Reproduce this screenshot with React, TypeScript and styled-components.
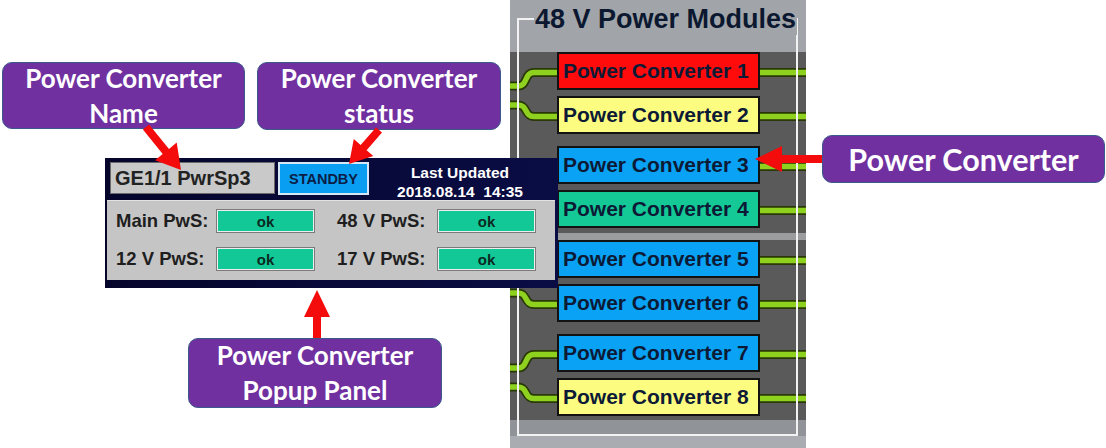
import React from "react";
import styled, { createGlobalStyle } from "styled-components";

const GlobalStyle = createGlobalStyle`
  html, body { margin: 0; padding: 0; background: #ffffff; }
  body { font-family: "Liberation Sans", Arial, sans-serif; }
`;

const Stage = styled.div`
  position: relative;
  width: 1106px;
  height: 448px;
  overflow: hidden;
  background: #ffffff;
  display: flex;
  padding-left: 510px;
  box-sizing: border-box;
`;

/* ---------- 48 V module panel ---------- */

const ModulePanel = styled.section`
  position: relative;
  width: 296px;
  height: 448px;
  flex: none;
  background: linear-gradient(
    180deg,
    #a1a5a9 0 52px,
    #5a5a5a 52px 420px,
    #909498 420px 436px,
    #a9adb1 436px 448px
  );
`;

const WireLayer = styled.svg`
  position: absolute;
  left: 0;
  top: 0;
  z-index: 0;
`;

const Frame = styled.fieldset`
  position: relative;
  z-index: 1;
  box-sizing: border-box;
  margin: 3px 0 0 7px;
  width: 281px;
  height: 433px;
  padding: 0;
  border: 2px solid #f2f2f2;
  min-inline-size: 0;
`;

const FrameTitle = styled.legend`
  margin-left: 15px;
  padding: 0 1px;
  font-size: 27px;
  line-height: 32px;
  font-weight: bold;
  color: #0b1830;
  white-space: nowrap;
`;

const ConverterList = styled.div`
  display: flex;
  flex-direction: column;
  gap: 12px;
  margin: 17px 0 0 38px;
`;

const Pair = styled.div`
  display: flex;
  flex-direction: column;
  gap: 6px;
`;

type ConvState = "fault" | "warn" | "standby" | "ok";

const stateColor: Record<ConvState, string> = {
  fault: "#ff0b0b",
  warn: "#fcfc80",
  standby: "#0aa2f5",
  ok: "#14c996",
};

const Converter = styled.div<{ $state: ConvState }>`
  box-sizing: border-box;
  width: 203px;
  height: 38px;
  border: 2px solid #121212;
  background: ${(p) => stateColor[p.$state]};
  display: flex;
  align-items: center;
  padding-left: 4px;
  font-size: 21px;
  font-weight: bold;
  color: #0c1a36;
  white-space: nowrap;
`;

/* ---------- popup panel ---------- */

const Popup = styled.div`
  position: absolute;
  left: 105px;
  top: 158px;
  z-index: 2;
  width: 453px;
  height: 130px;
  box-sizing: border-box;
  background: linear-gradient(90deg, #05052c, #0a0d44);
  display: flex;
  flex-direction: column;
`;

const PopupHeader = styled.div`
  display: flex;
  align-items: flex-start;
  gap: 3px;
  height: 42px;
  box-sizing: border-box;
  padding: 4px 0 0 5px;
`;

const NameBox = styled.div`
  box-sizing: border-box;
  width: 165px;
  height: 32px;
  background: #c9c9c9;
  border: 1px solid #6a6a6a;
  display: flex;
  align-items: center;
  padding-left: 4px;
  font-size: 20px;
  font-weight: bold;
  color: #222222;
  white-space: nowrap;
`;

const StatusBox = styled.div`
  box-sizing: border-box;
  width: 91px;
  height: 33px;
  background: #0a9ef2;
  border: 2px solid #d5e6f5;
  display: flex;
  align-items: center;
  justify-content: center;
  font-size: 14.5px;
  font-weight: bold;
  color: #0b1d45;
`;

const Updated = styled.div`
  flex: 1;
  padding: 1px 10px 0 0;
  text-align: center;
  color: #ffffff;
  font-weight: bold;
  font-size: 15.5px;
  line-height: 19px;
  white-space: pre;
`;

const PopupBody = styled.div`
  margin: 0 3px 0 2px;
  height: 80px;
  box-sizing: border-box;
  background: #c5c5c5;
  border-top: 1px solid #e2e2e2;
  padding: 8px 0 0 9px;
  display: grid;
  grid-template-columns: 200px 200px;
  column-gap: 21px;
  row-gap: 14px;
  align-content: start;
`;

const PwsItem = styled.div`
  display: flex;
  align-items: center;
`;

const PwsLabel = styled.span`
  width: 100px;
  font-size: 18.5px;
  font-weight: bold;
  color: #1e1e1e;
  white-space: nowrap;
`;

const PwsField = styled.span`
  box-sizing: border-box;
  width: 99px;
  height: 24px;
  background: #12c896;
  border: 1px solid #7a7a7a;
  box-shadow: inset 0 0 0 1px #eeeeee;
  display: flex;
  align-items: center;
  justify-content: center;
  font-size: 15px;
  font-weight: bold;
  color: #0b2a22;
`;

/* ---------- annotations ---------- */

const Callout = styled.div<{ $x: number; $y: number; $w: number; $h: number; $size: number }>`
  position: absolute;
  z-index: 3;
  left: ${(p) => p.$x}px;
  top: ${(p) => p.$y}px;
  width: ${(p) => p.$w}px;
  height: ${(p) => p.$h}px;
  box-sizing: border-box;
  background: #7030a0;
  border: 1.5px solid #3b5a8c;
  border-radius: 10px;
  color: #ffffff;
  font-family: Lato, "Open Sans", sans-serif;
  font-weight: 700;
  font-size: ${(p) => p.$size}px;
  line-height: 35px;
  display: flex;
  flex-direction: column;
  align-items: center;
  justify-content: center;
  text-align: center;
  white-space: nowrap;
`;

const ArrowLayer = styled.svg`
  position: absolute;
  left: 0;
  top: 0;
  z-index: 4;
  pointer-events: none;
`;

type Arrow = { from: [number, number]; to: [number, number]; w: number; hl: number; hw: number };

const arrowPoints = ({ from, to, w, hl, hw }: Arrow) => {
  const [x1, y1] = from;
  const [x2, y2] = to;
  const len = Math.hypot(x2 - x1, y2 - y1);
  const ux = (x2 - x1) / len;
  const uy = (y2 - y1) / len;
  const nx = -uy;
  const ny = ux;
  const bx = x2 - ux * hl;
  const by = y2 - uy * hl;
  const pts: [number, number][] = [
    [x1 + (nx * w) / 2, y1 + (ny * w) / 2],
    [bx + (nx * w) / 2, by + (ny * w) / 2],
    [bx + (nx * hw) / 2, by + (ny * hw) / 2],
    [x2, y2],
    [bx - (nx * hw) / 2, by - (ny * hw) / 2],
    [bx - (nx * w) / 2, by - (ny * w) / 2],
    [x1 - (nx * w) / 2, y1 - (ny * w) / 2],
  ];
  return pts.map(([x, y]) => `${x.toFixed(1)},${y.toFixed(1)}`).join(" ");
};

const arrows: Arrow[] = [
  { from: [146, 127], to: [181, 170], w: 8, hl: 24, hw: 28 },
  { from: [379, 130], to: [349, 164], w: 8, hl: 22, hw: 26 },
  { from: [317, 338], to: [317, 290], w: 8, hl: 27, hw: 26 },
  { from: [822, 159], to: [755, 159], w: 8, hl: 27, hw: 26 },
];

const pairs: { n: number; state: ConvState }[][] = [
  [
    { n: 1, state: "fault" },
    { n: 2, state: "warn" },
  ],
  [
    { n: 3, state: "standby" },
    { n: 4, state: "ok" },
  ],
  [
    { n: 5, state: "standby" },
    { n: 6, state: "standby" },
  ],
  [
    { n: 7, state: "standby" },
    { n: 8, state: "warn" },
  ],
];

const wirePaths = (() => {
  const paths: string[] = [];
  pairs.forEach((_, p) => {
    const top = 52 + p * 94;
    const a = top + 19 + 1.5;
    const b = top + 63 + 1.5;
    const mid = top + 41;
    paths.push(`M0,${mid - 7} H8 C18,${mid - 7} 14,${a} 24,${a} H50`);
    paths.push(`M0,${mid + 12} H8 C18,${mid + 12} 14,${b} 24,${b} H50`);
    paths.push(`M246,${a} H296`);
    paths.push(`M246,${b} H296`);
  });
  return paths;
})();

const pws = [
  ["Main PwS:", "ok"],
  ["48 V PwS:", "ok"],
  ["12 V PwS:", "ok"],
  ["17 V PwS:", "ok"],
];

export default function App() {
  return (
    <>
      <GlobalStyle />
      <Stage>
        <ModulePanel>
          <WireLayer width={296} height={448} viewBox="0 0 296 448">
            <rect x={45} y={233} width={251} height={7} fill="#9a9c9e" />
            {wirePaths.map((d, i) => (
              <path key={`o${i}`} d={d} fill="none" stroke="#2a3808" strokeWidth={9} strokeLinejoin="round" />
            ))}
            {wirePaths.map((d, i) => (
              <path key={`i${i}`} d={d} fill="none" stroke="#8fd11f" strokeWidth={5.5} strokeLinejoin="round" />
            ))}
          </WireLayer>
          <Frame>
            <FrameTitle>48 V Power Modules</FrameTitle>
            <ConverterList>
              {pairs.map((pair, i) => (
                <Pair key={i}>
                  {pair.map((c) => (
                    <Converter key={c.n} $state={c.state}>
                      Power Converter {c.n}
                    </Converter>
                  ))}
                </Pair>
              ))}
            </ConverterList>
          </Frame>
        </ModulePanel>

        <Popup>
          <PopupHeader>
            <NameBox>GE1/1 PwrSp3</NameBox>
            <StatusBox>STANDBY</StatusBox>
            <Updated>{"Last Updated\n2018.08.14  14:35"}</Updated>
          </PopupHeader>
          <PopupBody>
            {pws.map(([label, value]) => (
              <PwsItem key={label}>
                <PwsLabel>{label}</PwsLabel>
                <PwsField>{value}</PwsField>
              </PwsItem>
            ))}
          </PopupBody>
        </Popup>

        <Callout $x={2} $y={62} $w={243} $h={67} $size={26}>
          <span>Power Converter</span>
          <span>Name</span>
        </Callout>
        <Callout $x={257} $y={62} $w={244} $h={68} $size={26}>
          <span>Power Converter</span>
          <span>status</span>
        </Callout>
        <Callout $x={188} $y={338} $w={254} $h={70} $size={26}>
          <span>Power Converter</span>
          <span>Popup Panel</span>
        </Callout>
        <Callout $x={822} $y={135} $w={283} $h={48} $size={30.5}>
          <span>Power Converter</span>
        </Callout>

        <ArrowLayer width={1106} height={448} viewBox="0 0 1106 448">
          {arrows.map((a, i) => (
            <polygon key={i} points={arrowPoints(a)} fill="#f40b0b" />
          ))}
        </ArrowLayer>
      </Stage>
    </>
  );
}
